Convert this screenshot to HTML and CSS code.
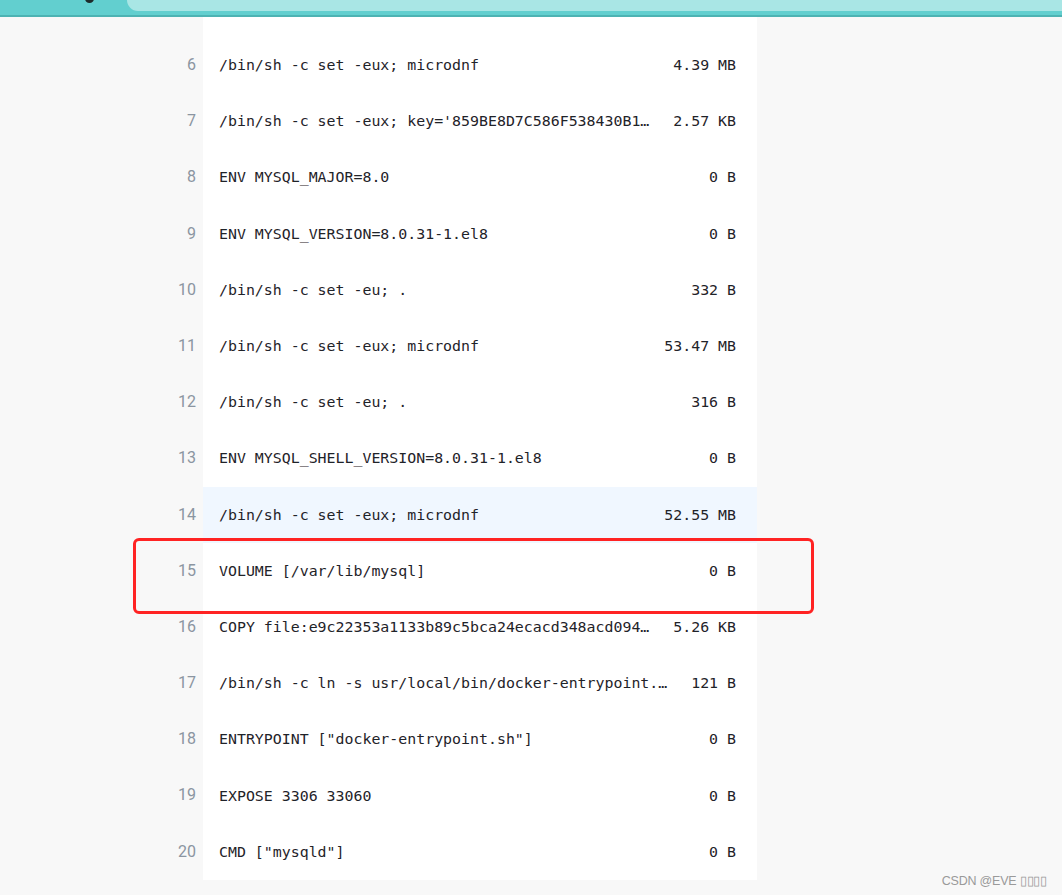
FILE: index.html
```html
<!DOCTYPE html>
<html lang="en">
<head>
    <meta charset="UTF-8">
    <title>Image layers</title>
    <link rel="stylesheet" href="styles.css">
</head>
<body>

    <div class="chrome">
        <div class="chrome-left"><span class="chrome-icon"></span></div>
        <div class="chrome-tab"></div>
    </div>

    <div class="layers">
        <div class="spacer"></div>

        <div class="row"><div class="num">6</div><div class="cell"><span class="cmd">/bin/sh -c set -eux; microdnf</span><span class="size">4.39 MB</span></div></div>
        <div class="row"><div class="num">7</div><div class="cell"><span class="cmd">/bin/sh -c set -eux; key='859BE8D7C586F538430B1…</span><span class="size">2.57 KB</span></div></div>
        <div class="row"><div class="num">8</div><div class="cell"><span class="cmd">ENV MYSQL_MAJOR=8.0</span><span class="size">0 B</span></div></div>
        <div class="row"><div class="num">9</div><div class="cell"><span class="cmd">ENV MYSQL_VERSION=8.0.31-1.el8</span><span class="size">0 B</span></div></div>
        <div class="row"><div class="num">10</div><div class="cell"><span class="cmd">/bin/sh -c set -eu; .</span><span class="size">332 B</span></div></div>
        <div class="row"><div class="num">11</div><div class="cell"><span class="cmd">/bin/sh -c set -eux; microdnf</span><span class="size">53.47 MB</span></div></div>
        <div class="row"><div class="num">12</div><div class="cell"><span class="cmd">/bin/sh -c set -eu; .</span><span class="size">316 B</span></div></div>
        <div class="row"><div class="num">13</div><div class="cell"><span class="cmd">ENV MYSQL_SHELL_VERSION=8.0.31-1.el8</span><span class="size">0 B</span></div></div>
        <div class="row hover"><div class="num">14</div><div class="cell"><span class="cmd">/bin/sh -c set -eux; microdnf</span><span class="size">52.55 MB</span></div></div>
        <div class="row marked"><div class="num">15</div><div class="cell"><span class="cmd">VOLUME [/var/lib/mysql]</span><span class="size">0 B</span></div></div>
        <div class="row"><div class="num">16</div><div class="cell"><span class="cmd">COPY file:e9c22353a1133b89c5bca24ecacd348acd094…</span><span class="size">5.26 KB</span></div></div>
        <div class="row"><div class="num">17</div><div class="cell"><span class="cmd">/bin/sh -c ln -s usr/local/bin/docker-entrypoint.…</span><span class="size">121 B</span></div></div>
        <div class="row"><div class="num">18</div><div class="cell"><span class="cmd">ENTRYPOINT ["docker-entrypoint.sh"]</span><span class="size">0 B</span></div></div>
        <div class="row"><div class="num">19</div><div class="cell"><span class="cmd">EXPOSE 3306 33060</span><span class="size">0 B</span></div></div>
        <div class="row"><div class="num">20</div><div class="cell"><span class="cmd">CMD ["mysqld"]</span><span class="size">0 B</span></div></div>
    </div>

    <div class="watermark">CSDN @EVE ▯▯▯▯</div>

</body>
</html>
```

FILE: styles.css
```css
body {
    margin: 0;
    padding: 0;
    background: #f8f8f8;
    font-family: Roboto, 'Noto Sans', sans-serif;
    color: #1f2329;
    overflow: hidden;
}

/* browser strip at the top */
.chrome {
    display: flex;
    height: 15px;
    background: #62cfcf;
    border-bottom: 2px solid #4db3b3;
}

.chrome-left {
    width: 127px;
    position: relative;
}

.chrome-icon {
    position: absolute;
    left: 85px;
    top: -6px;
    width: 9px;
    height: 9px;
    border-radius: 50%;
    background: #1d2a2a;
}

.chrome-tab {
    flex: 1;
    height: 11px;
    background: #a9e6e5;
    border-bottom-left-radius: 11px;
}

/* layer list */
.layers {
    display: flex;
    flex-direction: column;
}

.spacer {
    margin-left: 203px;
    width: 554px;
    height: 20px;
    background: #fff;
}

.row {
    display: flex;
    height: 56.2px;
    position: relative;
}

.num {
    width: 196px;
    padding-right: 7px;
    text-align: right;
    font-size: 16px;
    line-height: 56.2px;
    color: #8b95a1;
}

.cell {
    width: 554px;
    box-sizing: border-box;
    padding: 0 21px 0 16px;
    display: flex;
    justify-content: space-between;
    align-items: center;
    background: #fff;
    font-family: 'DejaVu Sans Mono', 'Liberation Mono', monospace;
    font-size: 14.9px;
    white-space: pre;
}

.row.hover .cell {
    background: #f0f7ff;
}

.row.marked {
    z-index: 2;
}

.row.marked::after {
    content: "";
    position: absolute;
    left: 133px;
    top: -5px;
    width: 675px;
    height: 70px;
    border: 3px solid #ff2323;
    border-radius: 6px;
}

.watermark {
    position: absolute;
    right: 15px;
    bottom: 7px;
    font-family: 'Liberation Sans', Arial, sans-serif;
    font-size: 12.5px;
    letter-spacing: -0.2px;
    color: #9a9a9a;
}
```
